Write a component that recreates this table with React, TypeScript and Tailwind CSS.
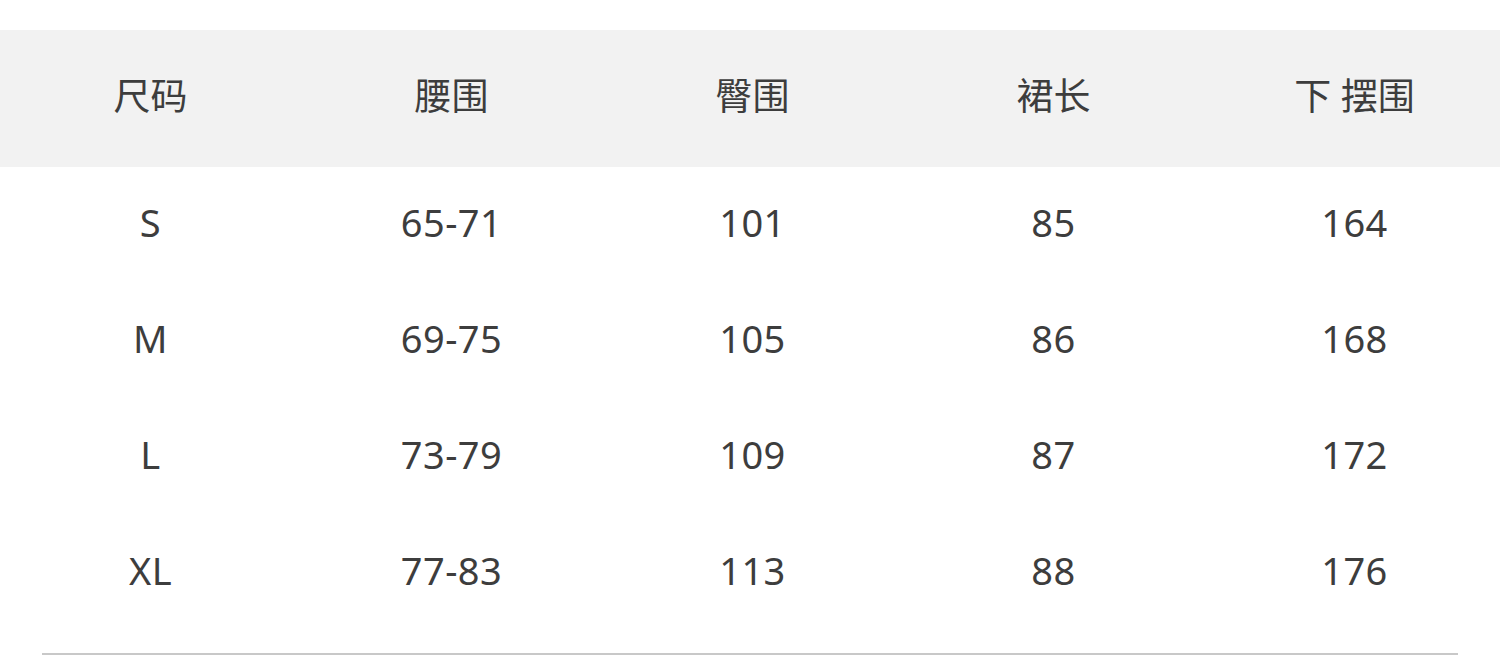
const headers = ['尺码', '腰围', '臀围', '裙长', '下 摆围']

const rows = [
  ['S', '65-71', '101', '85', '164'],
  ['M', '69-75', '105', '86', '168'],
  ['L', '73-79', '109', '87', '172'],
  ['XL', '77-83', '113', '88', '176'],
]

export default function App() {
  return (
    <div
      className="w-[1500px] h-[666px] overflow-hidden bg-white pt-[30px] text-[#3d3d3d]"
      style={{ fontFamily: '"Noto Sans", "Noto Sans CJK SC", sans-serif' }}
    >
      {/* Header band */}
      <div className="grid grid-cols-[repeat(5,301px)] h-[137px] bg-[#f2f2f2] items-center">
        {headers.map((h) => (
          <div key={h} className="text-center text-[37px] leading-none pb-[6px]">
            {h}
          </div>
        ))}
      </div>

      {/* Body rows */}
      <div>
        {rows.map((r) => (
          <div key={r[0]} className="grid grid-cols-[repeat(5,301px)] h-[116px] items-center">
            {r.map((c, i) => (
              <div key={i} className="text-center text-[38px] leading-none tracking-[0.5px] pb-[6px]">
                {c}
              </div>
            ))}
          </div>
        ))}
      </div>

      <div className="mx-[42px] mt-[22px] h-[2px] bg-[#c8c8c8]" />
    </div>
  )
}
